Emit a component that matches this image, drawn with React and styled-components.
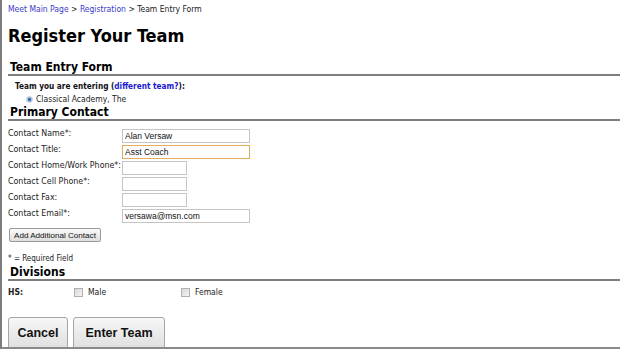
import React from "react";
import styled, { createGlobalStyle } from "styled-components";

const GlobalStyle = createGlobalStyle`
  html, body {
    margin: 0;
    padding: 0;
    background: #fff;
  }
  body {
    font-family: "DejaVu Sans Condensed", "DejaVu Sans", Verdana, sans-serif;
    color: #111;
  }
`;

const contacts = [
  { label: "Contact Name*:", value: "Alan Versaw", wide: true },
  { label: "Contact Title:", value: "Asst Coach", wide: true, focused: true },
  { label: "Contact Home/Work Phone*:", value: "" },
  { label: "Contact Cell Phone*:", value: "" },
  { label: "Contact Fax:", value: "" },
  { label: "Contact Email*:", value: "versawa@msn.com", wide: true },
];

const App = () => {
  return (
    <>
      <GlobalStyle />
      <Page>
        <Breadcrumb>
          <a>Meet Main Page</a> &gt; <a>Registration</a> &gt; Team Entry Form
        </Breadcrumb>
        <Title>Register Your Team</Title>

        <SectionHeading $top={14}>Team Entry Form</SectionHeading>
        <TeamBlock>
          <TeamLabel>
            Team you are entering (<a>different team?</a>):
          </TeamLabel>
          <TeamChoice>
            <Radio />
            <span>Classical Academy, The</span>
          </TeamChoice>
        </TeamBlock>

        <SectionHeading>Primary Contact</SectionHeading>
        <ContactGrid>
          {contacts.map((c) => (
            <React.Fragment key={c.label}>
              <Label>{c.label}</Label>
              <Field
                readOnly
                value={c.value}
                $wide={c.wide}
                $focused={c.focused}
              />
            </React.Fragment>
          ))}
        </ContactGrid>
        <SmallButton>Add Additional Contact</SmallButton>
        <Note>* = Required Field</Note>

        <SectionHeading $top={1}>Divisions</SectionHeading>
        <DivisionRow>
          <DivisionName>HS:</DivisionName>
          <Check>
            <Box />
            <span>Male</span>
          </Check>
          <Check>
            <Box />
            <span>Female</span>
          </Check>
        </DivisionRow>

        <Actions>
          <BigButton $w={60}>Cancel</BigButton>
          <BigButton $w={92}>Enter Team</BigButton>
        </Actions>
      </Page>
    </>
  );
};

const Page = styled.div`
  box-sizing: border-box;
  height: 349px;
  overflow: hidden;
  border-left: 2px solid #7d7d7d;
  border-bottom: 2px solid #8a8a8a;
  padding: 4px 0 0 6px;
  a {
    color: #3a3ac8;
    text-decoration: none;
  }
`;

const Breadcrumb = styled.div`
  font-size: 8.5px;
  line-height: 11px;
  color: #222;
`;

const Title = styled.h1`
  margin: 10px 0 0 0;
  font-size: 18px;
  line-height: 22px;
  font-weight: bold;
  color: #000;
`;

const SectionHeading = styled.h2`
  margin: ${(p) => p.$top || 0}px 0 0 0;
  padding: 0 0 0 2px;
  font-size: 12px;
  line-height: 13px;
  font-weight: bold;
  color: #000;
  border-bottom: 2px solid #7e7e7e;
`;

const TeamBlock = styled.div`
  padding: 4px 0 0 7px;
  font-size: 8.2px;
  line-height: 13px;
`;

const TeamLabel = styled.div`
  font-weight: bold;
  a {
    color: #1a1ad0;
  }
`;

const TeamChoice = styled.div`
  display: flex;
  align-items: center;
  gap: 3px;
  padding-left: 11px;
  font-size: 8.5px;
  color: #222;
`;

const Radio = styled.span`
  width: 5px;
  height: 5px;
  border-radius: 50%;
  background: radial-gradient(circle, #2f6aa8 0 35%, #a9c6e2 50% 100%);
  border: 1px solid #c3ccd6;
`;

const ContactGrid = styled.div`
  display: grid;
  grid-template-columns: 114px 1fr;
  row-gap: 2px;
  padding-top: 8px;
  align-items: start;
`;

const Label = styled.div`
  font-size: 8.8px;
  line-height: 9px;
  white-space: nowrap;
  color: #222;
`;

const Field = styled.input`
  box-sizing: border-box;
  width: ${(p) => (p.$wide ? "128px" : "65px")};
  height: 14px;
  margin: 0;
  padding: 0 2px;
  border: 1px solid ${(p) => (p.$focused ? "#e3ad5a" : "#c4c4c4")};
  font-family: "Liberation Sans", Arial, sans-serif;
  font-size: 8.5px;
  color: #111;
  outline: none;
`;

const SmallButton = styled.button`
  display: block;
  margin: 5px 0 0 1px;
  height: 14px;
  padding: 0 4px;
  font-family: "Liberation Sans", Arial, sans-serif;
  font-size: 8.1px;
  color: #111;
  background: linear-gradient(#fafafa, #dedede);
  border: 1px solid #9a9a9a;
  border-radius: 2px;
`;

const Note = styled.div`
  margin-top: 11px;
  font-size: 8px;
  line-height: 12px;
  color: #222;
`;

const DivisionRow = styled.div`
  display: grid;
  grid-template-columns: 66px 107px 1fr;
  align-items: center;
  padding-top: 5px;
  font-size: 8.5px;
  line-height: 12px;
  color: #222;
`;

const DivisionName = styled.span`
  font-weight: bold;
`;

const Check = styled.label`
  display: flex;
  align-items: center;
  gap: 5px;
`;

const Box = styled.span`
  width: 7px;
  height: 7px;
  border: 1px solid #b0b0b0;
  background: linear-gradient(135deg, #d8d8d8, #f4f4f4);
`;

const Actions = styled.div`
  display: flex;
  gap: 5px;
  margin-top: 19px;
`;

const BigButton = styled.button`
  width: ${(p) => p.$w}px;
  height: 40px;
  padding: 0 0 8px;
  font-family: "Liberation Sans", Arial, sans-serif;
  font-size: 12.5px;
  font-weight: bold;
  color: #111;
  background: linear-gradient(#f7f7f7, #d9d9d9);
  border: 1px solid #a6a6a6;
  border-radius: 3px 3px 0 0;
`;

export default App;
